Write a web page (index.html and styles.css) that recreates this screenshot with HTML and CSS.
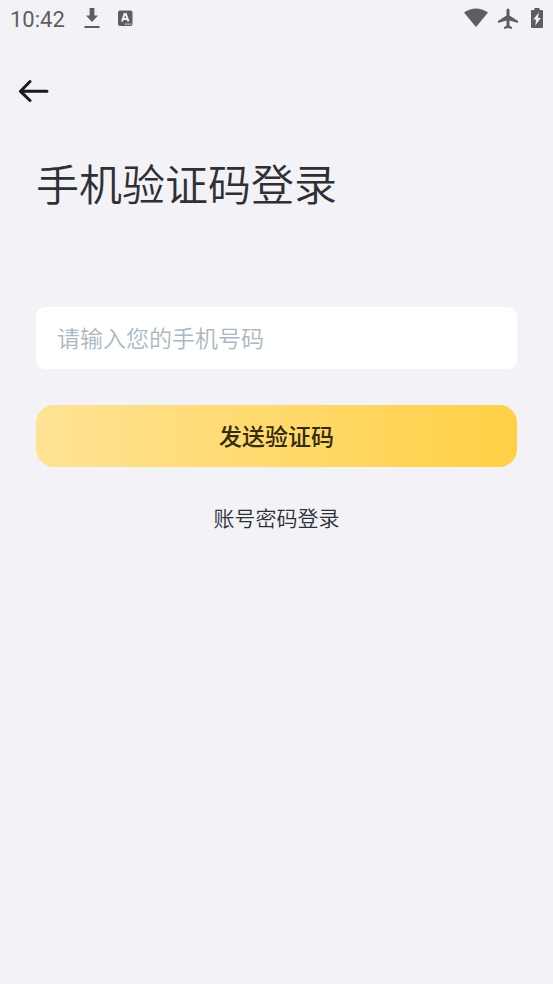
FILE: index.html
```html
<!DOCTYPE html>
<html lang="zh-CN">
<head>
<meta charset="utf-8">
<meta name="viewport" content="width=device-width, initial-scale=1">
<title>手机验证码登录</title>
<link rel="stylesheet" href="styles.css">
</head>
<body>
<header class="status">
  <div class="status-group">
    <time class="clock">10:42</time>
    <svg class="download" width="16" height="22" viewBox="0 0 16 22" aria-hidden="true"><path d="M5.600 1h4.800v7.500H14l-6 6.500-6-6.500h3.600z"/><path d="M0.500 19h15v2h-15z"/></svg>
    <svg class="keyboard" width="16" height="16" viewBox="0 0 16 16" aria-hidden="true"><rect x="1" y="0.500" width="14.500" height="15.500" rx="2"/><path class="line" d="M5 11.500 7.600 4h1.200L11.500 11.500M5.800 9h5"/><path class="cut" d="M8 13.500h1.300v1.300H8zm2.400 0h1.300v1.300h-1.300zm2.400 0h1.300v1.300h-1.300z"/></svg>
  </div>
  <div class="status-group">
    <svg width="24" height="20" viewBox="0 0 24 20" aria-hidden="true"><path d="M0 4.500Q12-3.500 24 4.500L12.700 18.300q-.7.7-1.400 0z"/></svg>
    <svg class="plane" width="20" height="21" viewBox="0 0 20 21" aria-hidden="true"><path d="M8.500 2a1.500 1.500 0 0 1 3 0v5.500L20 13v2l-8.500-2.500v5l2.500 1.800V21l-4-1.100L6 21v-1.700l2.500-1.800v-5L0 15v-2l8.500-5.500z"/></svg>
    <svg class="battery" width="12" height="20" viewBox="0 0 12 20" aria-hidden="true"><path d="M3.500 0h5v2H11q1 0 1 1v16q0 1-1 1H1q-1 0-1-1V3q0-1 1-1h2.500z"/><path class="cut" d="M7.800 4.500 2.300 11.500h2.700L4.300 17.500 9.800 10H7z"/></svg>
  </div>
</header>
<nav class="nav">
  <button class="back" type="button" aria-label="返回">
    <svg width="30" height="24" viewBox="0 0 30 24" aria-hidden="true"><path d="M11 2.500 1.500 12.300 11 21.500M2 12.300h26"/></svg>
  </button>
</nav>
<main class="content">
  <h1 class="title">手机验证码登录</h1>
  <form class="form">
    <input class="phone" type="tel" aria-label="手机号码" placeholder="请输入您的手机号码">
    <button class="submit" type="button">发送验证码</button>
  </form>
  <a class="switch" href="#">账号密码登录</a>
</main>
</body>
</html>
```
FILE: styles.css
```css
* {
  box-sizing: border-box;
}

body {
  margin: 0;
  min-height: 100vh;
  background: #f3f2f7;
  color: #2d3135;
  font-family: "Noto Sans CJK SC", sans-serif;
}

svg {
  display: block;
  fill: #5e5e60;
}

.status {
  display: flex;
  justify-content: space-between;
  align-items: center;
  height: 36px;
  padding: 0 10px;
}

.status-group {
  display: flex;
  align-items: center;
}

.clock {
  padding-top: 4px;
  font: 22px/34px Roboto, sans-serif;
  color: #5e5e60;
}

.download {
  margin-left: 19px;
}

.keyboard {
  margin-left: 17px;
}

.plane {
  margin-left: 10px;
}

.battery {
  margin-left: 13px;
}

.cut {
  fill: #f3f2f7;
}

.line {
  fill: none;
  stroke: #f3f2f7;
  stroke-width: 2;
}

.nav {
  padding: 43px 19px 0;
}

.back {
  display: block;
  padding: 0;
  border: 0;
  background: none;
}

.back svg {
  fill: none;
  stroke: #181b20;
  stroke-width: 3;
  stroke-linecap: round;
  stroke-linejoin: round;
}

.content {
  display: flex;
  flex-direction: column;
  padding: 47px 36px 0;
}

.title {
  margin: 0;
  font-size: 43px;
  font-weight: 350;
  line-height: 64px;
}

.form {
  display: flex;
  flex-direction: column;
  gap: 36px;
  margin-top: 93px;
}

.phone {
  width: 100%;
  height: 62px;
  padding: 0 21px 2px;
  border: 0;
  border-radius: 9px;
  background: #fff;
  color: #2d3135;
  font: 350 23px/34px "Noto Sans CJK SC", sans-serif;
}

.phone::placeholder {
  color: #abb8c3;
  opacity: 1;
}

.submit {
  height: 62px;
  padding: 0 0 2px;
  border: 0;
  border-radius: 18px;
  background: linear-gradient(90deg, #ffe394, #ffd045);
  color: #352b0e;
  font: 500 23px/34px "Noto Sans CJK SC", sans-serif;
}

.switch {
  align-self: center;
  margin-top: 34px;
  color: #2d3135;
  font-size: 21px;
  font-weight: 350;
  line-height: 32px;
  text-decoration: none;
}
```
